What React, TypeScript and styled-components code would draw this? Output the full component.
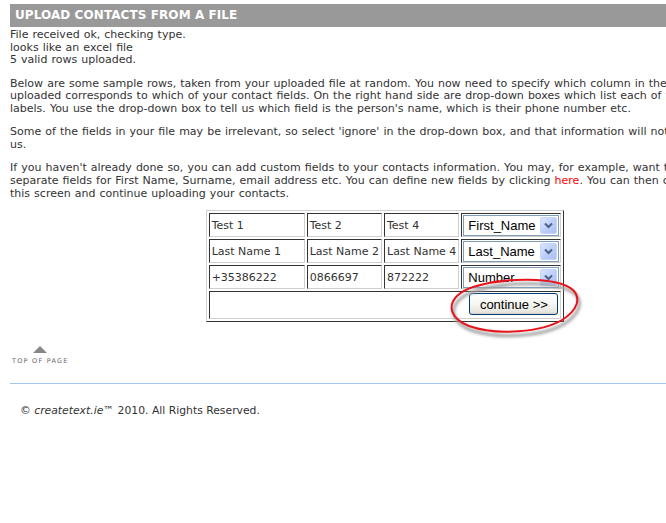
import React from 'react';
import styled, { createGlobalStyle } from 'styled-components';

const GlobalStyle = createGlobalStyle`
  html, body { margin: 0; padding: 0; background: #fff; overflow: hidden; }
  body {
    font-family: "DejaVu Sans", Verdana, sans-serif;
    font-size: 11px;
    color: #333;
  }
`;

const Page = styled.div`
  width: 750px;
  padding: 4px 10px 0;
`;

const Header = styled.h1`
  margin: 0;
  height: 23px;
  padding-left: 5px;
  background: #999999;
  color: #fff;
  font: bold 12px/23px "DejaVu Sans", Verdana, sans-serif;
  letter-spacing: 0.08px;
  text-transform: uppercase;
`;

const Para = styled.p<{ $first?: boolean; $last?: boolean }>`
  margin: ${(p) => (p.$first ? '2px' : '0')} 0 ${(p) => (p.$last ? '0' : '10.5px')};
  line-height: 12.7px;
  word-spacing: 0.55px;
  white-space: nowrap;
`;

const Line = styled.span`
  display: block;
`;

const RedLink = styled.a`
  color: #f00;
  text-decoration: none;
`;

const TableRow = styled.div`
  display: flex;
  justify-content: center;
  margin-top: 9.8px;
`;

const TableWrap = styled.div`
  position: relative;
`;

const DataTable = styled.table`
  border-collapse: separate;
  border-spacing: 2px;
  border: 1px solid;
  border-color: #cfcfcf #333 #333 #cfcfcf;
`;

const Cell = styled.td<{ $w?: number }>`
  box-sizing: border-box;
  width: ${(p) => (p.$w ? `${p.$w}px` : 'auto')};
  height: 24px;
  padding: 0 2px;
  border: 1px solid;
  border-color: #333 #cfcfcf #cfcfcf #333;
  font-size: 11px;
  color: #333;
  white-space: nowrap;
  vertical-align: middle;
`;

const SelectCell = styled(Cell)`
  padding: 0 1px;
`;

const ActionCell = styled.td`
  height: 28px;
  box-sizing: border-box;
  padding: 1px 2px 3px 1px;
  border: 1px solid;
  border-color: #333 #cfcfcf #cfcfcf #333;
  text-align: right;
  vertical-align: top;
`;

const SelectBox = styled.div`
  box-sizing: border-box;
  display: flex;
  align-items: center;
  width: 96px;
  height: 21px;
  padding-left: 4px;
  border: 1px solid #7f9db9;
  background: #fff;
  font: 13px "Liberation Sans", Arial, sans-serif;
  color: #000;
`;

const SelectLabel = styled.span`
  flex: 1;
  overflow: hidden;
  white-space: nowrap;
`;

const DropButton = styled.span`
  box-sizing: border-box;
  display: flex;
  align-items: center;
  justify-content: center;
  width: 17px;
  height: 17px;
  margin-right: 1px;
  border: 1px solid #c4d5fc;
  border-radius: 2px;
  background: linear-gradient(135deg, #dbe6ff 0%, #bccdf9 55%, #aebff2 100%);
`;

const ContinueButton = styled.button`
  box-sizing: border-box;
  width: 89px;
  height: 22px;
  padding: 0;
  border: 1px solid #003c74;
  border-radius: 3px;
  background: linear-gradient(#ffffff 0%, #f6f6f2 50%, #e6e5dd 90%, #d6d0c5 100%);
  font: 13px "Liberation Sans", Arial, sans-serif;
  color: #000;
`;

const Circle = styled.svg`
  position: absolute;
  left: 241px;
  top: 66px;
  pointer-events: none;
  overflow: visible;
`;

const TopLink = styled.div`
  display: flex;
  width: max-content;
  flex-direction: column;
  align-items: center;
  margin: 24px 0 0 2px;
`;

const Triangle = styled.span`
  width: 0;
  height: 0;
  border-left: 7px solid transparent;
  border-right: 7px solid transparent;
  border-bottom: 7px solid #888;
`;

const TopText = styled.span`
  margin-top: 4px;
  font-size: 6.5px;
  line-height: 8px;
  letter-spacing: 1.25px;
  color: #666;
  text-transform: uppercase;
`;

const Rule = styled.hr`
  margin: 18px 0 0;
  border: 0;
  border-top: 1px solid #a6c2ee;
  height: 0;
`;

const Footer = styled.p`
  margin: 20px 0 0;
  padding-left: 10px;
  font-size: 10.8px;
  line-height: 13px;
  color: #333;
`;

const Brand = styled.em`
  font-style: italic;
`;

const Chevron = () => (
  <svg width="9" height="7" viewBox="0 0 9 7">
    <path d="M1 1.5 L4.5 5 L8 1.5" fill="none" stroke="#4d6185" strokeWidth="2" />
  </svg>
);

const FieldSelect = ({ value }: { value: string }) => (
  <SelectBox>
    <SelectLabel>{value}</SelectLabel>
    <DropButton>
      <Chevron />
    </DropButton>
  </SelectBox>
);

const rows = [
  ['Test 1', 'Test 2', 'Test 4', 'First_Name'],
  ['Last Name 1', 'Last Name 2', 'Last Name 4', 'Last_Name'],
  ['+35386222', '0866697', '872222', 'Number'],
];

const ringPath =
  'M 30 10 C 55 2, 110 0, 126 14 C 134 22, 131 34, 115 44 C 95 56, 50 60, 22 50 C 4 43, 0 30, 10 20 C 18 12, 35 7, 58 5';

export default function App() {
  return (
    <>
      <GlobalStyle />
      <Page>
        <Header>Upload Contacts From A File</Header>
        <Para $first>
          <Line>File received ok, checking type.</Line>
          <Line>looks like an excel file</Line>
          <Line>5 valid rows uploaded.</Line>
        </Para>
        <Para>
          <Line>
            Below are some sample rows, taken from your uploaded file at random. You now need to specify which column in the file you
          </Line>
          <Line>
            uploaded corresponds to which of your contact fields. On the right hand side are drop-down boxes which list each of your field
          </Line>
          <Line>
            labels. You use the drop-down box to tell us which field is the person's name, which is their phone number etc.
          </Line>
        </Para>
        <Para>
          <Line>
            Some of the fields in your file may be irrelevant, so select 'ignore' in the drop-down box, and that information will not be uploaded to
          </Line>
          <Line>us.</Line>
        </Para>
        <Para $last>
          <Line>
            If you haven't already done so, you can add custom fields to your contacts information. You may, for example, want to have
          </Line>
          <Line>
            separate fields for First Name, Surname, email address etc. You can define new fields by clicking{' '}
            <RedLink href="#">here</RedLink>. You can then come back to
          </Line>
          <Line>this screen and continue uploading your contacts.</Line>
        </Para>

        <TableRow>
          <TableWrap>
            <DataTable>
              <tbody>
                {rows.map((r, i) => (
                  <tr key={i}>
                    <Cell $w={96}>{r[0]}</Cell>
                    <Cell $w={74}>{r[1]}</Cell>
                    <Cell $w={74}>{r[2]}</Cell>
                    <SelectCell $w={100}>
                      <FieldSelect value={r[3]} />
                    </SelectCell>
                  </tr>
                ))}
                <tr>
                  <ActionCell colSpan={4}>
                    <ContinueButton>continue &gt;&gt;</ContinueButton>
                  </ActionCell>
                </tr>
              </tbody>
            </DataTable>
            <Circle width="140" height="66" viewBox="0 0 140 66">
              <defs>
                <filter id="shadowBlur" x="-20%" y="-40%" width="140%" height="180%">
                  <feGaussianBlur stdDeviation="1.5" />
                </filter>
              </defs>
              <path
                d={ringPath}
                transform="translate(2 4)"
                fill="none"
                stroke="#a0a0a0"
                strokeWidth="3"
                filter="url(#shadowBlur)"
              />
              <path d={ringPath} fill="none" stroke="#e8141b" strokeWidth="2" strokeLinecap="round" />
            </Circle>
          </TableWrap>
        </TableRow>

        <TopLink>
          <Triangle />
          <TopText>Top of page</TopText>
        </TopLink>
        <Rule />
        <Footer>
          © <Brand>createtext.ie</Brand>™ 2010. All Rights Reserved.
        </Footer>
      </Page>
    </>
  );
}
